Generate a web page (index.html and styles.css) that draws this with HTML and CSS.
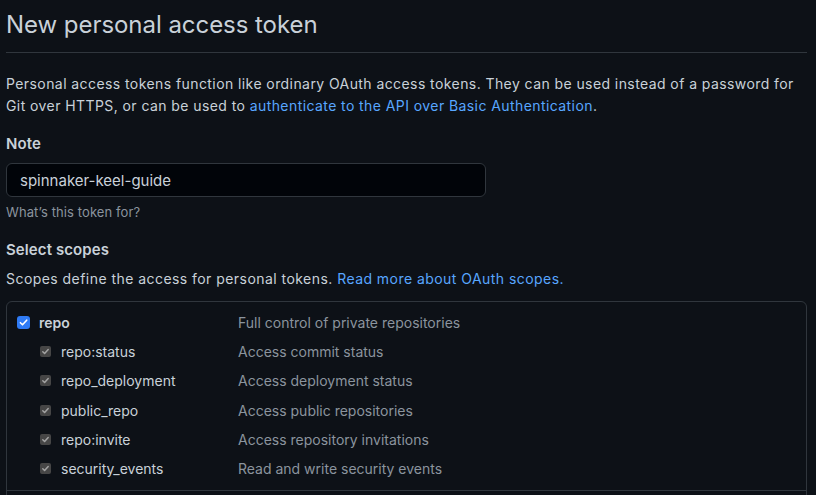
FILE: index.html
```html
<!DOCTYPE html>
<html lang="en">
<head>
<meta charset="utf-8">
<title>New personal access token</title>
<link rel="stylesheet" href="styles.css">
</head>
<body>
<main class="page">
  <div class="subhead">
    <h2 class="subhead-title">New personal access token</h2>
  </div>
  <p class="intro">Personal access tokens function like ordinary OAuth access tokens. They can be used instead of a password for Git over HTTPS, or can be used to <a href="#" class="link">authenticate to the API over Basic Authentication</a>.</p>

  <div class="form-group">
    <label class="label" for="note">Note</label>
    <input id="note" class="input" type="text" value="spinnaker-keel-guide">
    <p class="note">What’s this token for?</p>
  </div>

  <div class="form-group scopes-group">
    <div class="label">Select scopes</div>
    <p class="scopes-desc">Scopes define the access for personal tokens. <a href="#" class="link">Read more about OAuth scopes.</a></p>
  </div>

  <div class="scope-box">
    <div class="scope-section">
      <div class="scope-row parent">
        <span class="scope-name"><span class="cb cb-on"><svg viewBox="0 0 13 13" width="13" height="13"><path d="M3.4 6.7l2.1 2.1 4.2-4.6" fill="none" stroke="#fff" stroke-width="1.6" stroke-linecap="round" stroke-linejoin="round"/></svg></span><strong>repo</strong></span>
        <span class="scope-desc">Full control of private repositories</span>
      </div>
      <div class="scope-row child">
        <span class="scope-name"><span class="cb cb-dis"><svg viewBox="0 0 11 11" width="11" height="11"><path d="M2.8 5.7l1.8 1.8 3.6-4" fill="none" stroke="#a3a3a3" stroke-width="1.5" stroke-linecap="round" stroke-linejoin="round"/></svg></span>repo:status</span>
        <span class="scope-desc">Access commit status</span>
      </div>
      <div class="scope-row child">
        <span class="scope-name"><span class="cb cb-dis"><svg viewBox="0 0 11 11" width="11" height="11"><path d="M2.8 5.7l1.8 1.8 3.6-4" fill="none" stroke="#a3a3a3" stroke-width="1.5" stroke-linecap="round" stroke-linejoin="round"/></svg></span>repo_deployment</span>
        <span class="scope-desc">Access deployment status</span>
      </div>
      <div class="scope-row child">
        <span class="scope-name"><span class="cb cb-dis"><svg viewBox="0 0 11 11" width="11" height="11"><path d="M2.8 5.7l1.8 1.8 3.6-4" fill="none" stroke="#a3a3a3" stroke-width="1.5" stroke-linecap="round" stroke-linejoin="round"/></svg></span>public_repo</span>
        <span class="scope-desc">Access public repositories</span>
      </div>
      <div class="scope-row child">
        <span class="scope-name"><span class="cb cb-dis"><svg viewBox="0 0 11 11" width="11" height="11"><path d="M2.8 5.7l1.8 1.8 3.6-4" fill="none" stroke="#a3a3a3" stroke-width="1.5" stroke-linecap="round" stroke-linejoin="round"/></svg></span>repo:invite</span>
        <span class="scope-desc">Access repository invitations</span>
      </div>
      <div class="scope-row child">
        <span class="scope-name"><span class="cb cb-dis"><svg viewBox="0 0 11 11" width="11" height="11"><path d="M2.8 5.7l1.8 1.8 3.6-4" fill="none" stroke="#a3a3a3" stroke-width="1.5" stroke-linecap="round" stroke-linejoin="round"/></svg></span>security_events</span>
        <span class="scope-desc">Read and write security events</span>
      </div>
    </div>
    <div class="scope-section">
      <div class="scope-row parent">
        <span class="scope-name"><span class="cb"></span><strong>workflow</strong></span>
        <span class="scope-desc">Update GitHub Action workflows</span>
      </div>
    </div>
  </div>
</main>
</body>
</html>
```

FILE: styles.css
```css
html, body {
  margin: 0;
  padding: 0;
  background: #0d1117;
  color: #c9d1d9;
  font-family: Inter, "Liberation Sans", Arial, sans-serif;
  font-size: 14px;
  line-height: 1.5;
  overflow: hidden;
}

.page {
  width: 801px;
  padding-left: 6px;
}

.subhead {
  border-bottom: 1px solid #30363d;
  padding-top: 7px;
  padding-bottom: 9px;
}

.subhead-title {
  margin: 0;
  font-size: 24px;
  font-weight: 400;
  line-height: 36px;
  letter-spacing: -0.05px;
}

.intro {
  margin: 20px 0 0;
  line-height: 22px;
  letter-spacing: 0.42px;
}

.link {
  color: #58a6ff;
  text-decoration: none;
}

.form-group {
  margin-top: 16px;
}

.label {
  display: block;
  font-size: 15px;
  font-weight: 600;
  line-height: 21px;
  margin-bottom: 9px;
  letter-spacing: 0.1px;
}

.input {
  display: block;
  box-sizing: border-box;
  width: 480px;
  height: 34px;
  padding: 5px 13px;
  background: #010409;
  border: 1px solid #30363d;
  border-radius: 6px;
  color: #c9d1d9;
  font-family: inherit;
  font-size: 15px;
}

.note {
  margin: 6px 0 0;
  font-size: 13px;
  line-height: 18px;
  letter-spacing: 0.1px;
  color: #8b949e;
}

.scopes-group {
  margin-top: 18px;
}

.scopes-desc {
  margin: 0;
  line-height: 20px;
  letter-spacing: 0.45px;
}

.scope-box {
  margin-top: 12px;
  border: 1px solid #30363d;
  border-radius: 6px;
}

.scope-section {
  padding: 6px 0 7px;
}

.scope-section + .scope-section {
  border-top: 1px solid #30363d;
  padding-top: 8px;
}

.scope-row {
  display: flex;
  align-items: center;
  height: 29.2px;
}

.scope-name {
  display: flex;
  align-items: center;
  box-sizing: border-box;
  width: 231px;
  flex: none;
}

.parent .scope-name {
  padding-left: 10px;
}

.child .scope-name {
  padding-left: 33px;
}

.scope-name strong {
  font-weight: 600;
}

.cb {
  display: inline-flex;
  flex: none;
  box-sizing: border-box;
  margin-right: 9px;
}

.cb-on {
  width: 13px;
  height: 13px;
  border-radius: 3px;
  background: #2f7bf5;
}

.cb-dis {
  width: 11px;
  height: 11px;
  border-radius: 2px;
  background: #464646;
  margin-right: 10px;
}

.parent .cb {
  width: 13px;
  height: 13px;
}

.scope-desc {
  color: #8b949e;
}
```
